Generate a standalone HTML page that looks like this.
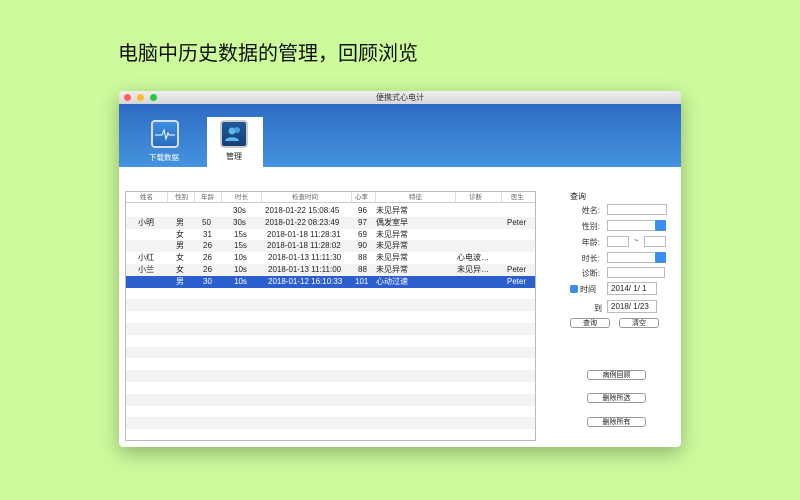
<!DOCTYPE html><html><head><meta charset="utf-8"><style>
*{margin:0;padding:0;box-sizing:border-box}
body{width:800px;height:500px;background:#cdfb9c;position:relative;overflow:hidden;font-family:"Liberation Sans","Noto Sans CJK SC",sans-serif;color:#222}
.a{position:absolute}
.h1{left:118px;top:37px;font-size:20px;color:#111}
.win{left:119px;top:91px;width:562px;height:356px;background:#fff;box-shadow:0 6px 20px rgba(0,0,0,.3);border-radius:4px;overflow:hidden}
.tb{left:0;top:0;width:562px;height:13px;background:linear-gradient(#eee,#d8d8d8);font-size:8px;text-align:center;line-height:13px;color:#333}
.dot{top:3px;width:7px;height:7px;border-radius:50%}
.hd{left:0;top:13px;width:562px;height:63px;background:linear-gradient(#2d6bc4,#4594df)}
.tab{top:26px;width:56px;height:50px;background:#fff}
.ic{width:28px;height:28px;border-radius:4px;border:2px solid #ddd}
.tbl{left:6px;top:100px;width:411px;height:250px;border:1px solid #bbb}
.r{position:absolute;left:0;width:409px;height:11.8px;font-size:8px;line-height:11.8px}
.r span{position:absolute;white-space:nowrap}
.hdr{font-size:6.5px;color:#666;border-bottom:1px solid #ccc;height:11px;line-height:11px}
.lb{font-size:8px;color:#333;text-align:right;width:40px}
.in{border:1px solid #bbb;background:#fff;height:11px}
.btn{border:1px solid #999;border-radius:3px;background:#fff;font-size:7px;text-align:center;height:10px;line-height:9px}
</style></head><body>
<div class="a h1">电脑中历史数据的管理，回顾浏览</div>
<div class="a win">
<div class="a tb">便携式心电计</div>
<div class="a dot" style="left:5px;background:#fc5f57"></div>
<div class="a dot" style="left:18px;background:#fdbc2e"></div>
<div class="a dot" style="left:31px;background:#29c840"></div>
<div class="a hd"></div>
<div class="a ic" style="left:32px;top:29px;background:linear-gradient(#3d8de0,#2a6cc0);border-color:#d8dde6"><svg width="24" height="24"><path d="M2 13h7l2-5 2 9 2-6 1 2h6" stroke="#fff" fill="none" stroke-width="1"/></svg></div>
<div class="a" style="left:30px;top:61px;font-size:7.5px;color:#fff">下载数据</div>
<div class="a tab" style="left:88px"></div>
<div class="a ic" style="left:101px;top:29px;background:linear-gradient(#1f5a9c,#163f73);border-color:#ccc"><svg width="24" height="24"><circle cx="10" cy="9" r="3.5" fill="#5cb7f0"/><path d="M3 19c0-5 14-5 14 0z" fill="#5cb7f0"/><circle cx="15" cy="8" r="3" fill="#4aa0e0"/></svg></div>
<div class="a" style="left:107px;top:60px;font-size:8px;color:#222">管理</div>
<div class="a tbl">
<div class="r hdr" style="top:0"><span style="left:14px">姓名</span><span style="left:49px">性别</span><span style="left:75px">年龄</span><span style="left:109px">时长</span><span style="left:166px">检查时间</span><span style="left:229px">心率</span><span style="left:283px">特征</span><span style="left:343px">诊断</span><span style="left:385px">医生</span></div>
<div class="r" style="top:13px"><span style="left:107px">30s</span><span style="left:139px">2018-01-22 15:08:45</span><span style="left:232px">96</span><span style="left:250px">未见异常</span></div>
<div class="r" style="top:24.8px;background:#f3f3f3"><span style="left:12px">小明</span><span style="left:50px">男</span><span style="left:76px">50</span><span style="left:107px">30s</span><span style="left:139px">2018-01-22 08:23:49</span><span style="left:232px">97</span><span style="left:250px">偶发室早</span><span style="left:381px">Peter</span></div>
<div class="r" style="top:36.6px"><span style="left:50px">女</span><span style="left:77px">31</span><span style="left:108px">15s</span><span style="left:141px">2018-01-18 11:28:31</span><span style="left:232px">69</span><span style="left:250px">未见异常</span></div>
<div class="r" style="top:48.4px;background:#f3f3f3"><span style="left:50px">男</span><span style="left:77px">26</span><span style="left:108px">15s</span><span style="left:141px">2018-01-18 11:28:02</span><span style="left:232px">90</span><span style="left:250px">未见异常</span></div>
<div class="r" style="top:60.2px"><span style="left:12px">小红</span><span style="left:50px">女</span><span style="left:77px">26</span><span style="left:108px">10s</span><span style="left:142px">2018-01-13 11:11:30</span><span style="left:232px">88</span><span style="left:250px">未见异常</span><span style="left:331px">心电波…</span></div>
<div class="r" style="top:72px;background:#f3f3f3"><span style="left:12px">小兰</span><span style="left:50px">女</span><span style="left:77px">26</span><span style="left:108px">10s</span><span style="left:142px">2018-01-13 11:11:00</span><span style="left:232px">88</span><span style="left:250px">未见异常</span><span style="left:331px">未见异…</span><span style="left:381px">Peter</span></div>
<div class="r" style="top:83.8px;background:#2b5fce;color:#fff"><span style="left:50px">男</span><span style="left:77px">30</span><span style="left:108px">10s</span><span style="left:142px">2018-01-12 16:10:33</span><span style="left:229px">101</span><span style="left:250px">心动过速</span><span style="left:381px">Peter</span></div>
<div class="r" style="top:107.4px;background:#f3f3f3"></div><div class="r" style="top:131px;background:#f3f3f3"></div><div class="r" style="top:154.6px;background:#f3f3f3"></div><div class="r" style="top:178.2px;background:#f3f3f3"></div><div class="r" style="top:201.8px;background:#f3f3f3"></div><div class="r" style="top:225.4px;background:#f3f3f3"></div>
<div class="a" style="left:0;top:0;width:409px;background:linear-gradient(90deg,transparent 41px,#ddd 41px,#ddd 42px,transparent 42px,transparent 68px,#ddd 68px,#ddd 69px,transparent 69px,transparent 95px,#ddd 95px,#ddd 96px,transparent 96px,transparent 135px,#ddd 135px,#ddd 136px,transparent 136px,transparent 225px,#ddd 225px,#ddd 226px,transparent 226px,transparent 249px,#ddd 249px,#ddd 250px,transparent 250px,transparent 329px,#ddd 329px,#ddd 330px,transparent 330px,transparent 375px,#ddd 375px,#ddd 376px,transparent 376px);height:11px"></div>
</div>
<div class="a" style="left:451px;top:100px;font-size:8px">查询</div>
<div class="a lb" style="left:441px;top:114px">姓名:</div><div class="a in" style="left:488px;top:113px;width:60px"></div>
<div class="a lb" style="left:441px;top:130px">性别:</div><div class="a in" style="left:488px;top:129px;width:59px"></div><div class="a" style="left:536px;top:129px;width:11px;height:11px;background:#3a8ef0;border-radius:2px"></div>
<div class="a lb" style="left:441px;top:146px">年龄:</div><div class="a in" style="left:488px;top:145px;width:22px"></div><div class="a" style="left:515px;top:145px;font-size:8px">~</div><div class="a in" style="left:525px;top:145px;width:22px"></div>
<div class="a lb" style="left:441px;top:162px">时长:</div><div class="a in" style="left:488px;top:161px;width:59px"></div><div class="a" style="left:536px;top:161px;width:11px;height:11px;background:#3a8ef0;border-radius:2px"></div>
<div class="a lb" style="left:441px;top:177px">诊断:</div><div class="a in" style="left:488px;top:176px;width:58px"></div>
<div class="a" style="left:451px;top:194px;width:8px;height:8px;background:#3a8ef0;border-radius:2px"></div><div class="a" style="left:461px;top:193px;font-size:8px">时间</div>
<div class="a in" style="left:488px;top:191px;width:50px;height:13px;font-size:8px;line-height:12px;padding-left:3px">2014/ 1/ 1</div>
<div class="a" style="left:475px;top:212px;font-size:8px">到</div>
<div class="a in" style="left:488px;top:209px;width:50px;height:13px;font-size:8px;line-height:12px;padding-left:3px">2018/ 1/23</div>
<div class="a btn" style="left:451px;top:227px;width:40px">查询</div>
<div class="a btn" style="left:500px;top:227px;width:40px">清空</div>
<div class="a btn" style="left:468px;top:279px;width:59px">病例回顾</div>
<div class="a btn" style="left:468px;top:302px;width:59px">删除所选</div>
<div class="a btn" style="left:468px;top:326px;width:59px">删除所有</div>
</div>
</body></html>
